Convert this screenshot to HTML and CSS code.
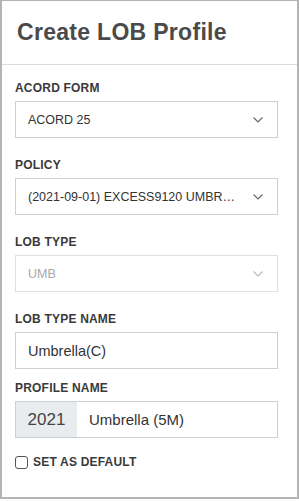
FILE: index.html
```html
<!DOCTYPE html>
<html lang="en">
<head>
    <meta charset="UTF-8">
    <meta name="viewport" content="width=device-width, initial-scale=1.0">
    <title>Create LOB Profile</title>
    <link rel="stylesheet" href="styles.css">
</head>
<body>
    <div class="panel">
        <div class="panel-header">
            <h1>Create LOB Profile</h1>
        </div>

        <div class="panel-body">
            <div class="field">
                <label>ACORD FORM</label>
                <div class="select">
                    <span class="select-value">ACORD 25</span>
                    <svg class="chevron" width="10" height="6" viewBox="0 0 10 6"><path d="M0.5 0.5 L5 5 L9.5 0.5" fill="none" stroke="#666" stroke-width="1.2"/></svg>
                </div>
            </div>

            <div class="field">
                <label>POLICY</label>
                <div class="select">
                    <span class="select-value">(2021-09-01) EXCESS9120 UMBRELLA</span>
                    <svg class="chevron" width="10" height="6" viewBox="0 0 10 6"><path d="M0.5 0.5 L5 5 L9.5 0.5" fill="none" stroke="#666" stroke-width="1.2"/></svg>
                </div>
            </div>

            <div class="field">
                <label>LOB TYPE</label>
                <div class="select disabled">
                    <span class="select-value">UMB</span>
                    <svg class="chevron" width="10" height="6" viewBox="0 0 10 6"><path d="M0.5 0.5 L5 5 L9.5 0.5" fill="none" stroke="#bbb" stroke-width="1.2"/></svg>
                </div>
            </div>

            <div class="field tight">
                <label>LOB TYPE NAME</label>
                <div class="text-input">Umbrella(C)</div>
            </div>

            <div class="field">
                <label>PROFILE NAME</label>
                <div class="input-group">
                    <span class="addon">2021</span>
                    <span class="group-value">Umbrella (5M)</span>
                </div>
            </div>

            <div class="check-row">
                <span class="checkbox"></span>
                <span class="check-label">SET AS DEFAULT</span>
            </div>
        </div>
    </div>
</body>
</html>
```

FILE: styles.css
```css
* {
    box-sizing: border-box;
}

body {
    margin: 0;
    font-family: 'Liberation Sans', Arial, sans-serif;
    color: #333;
    background-color: white;
}

.panel {
    height: 499px;
    border: 2px solid #b4b4b4;
    border-top-width: 1px;
    background-color: white;
}

.panel-header {
    height: 64px;
    padding: 0 15px;
    display: flex;
    align-items: center;
    border-bottom: 1px solid #d9dce0;
}

h1 {
    margin: 0;
    font-size: 23px;
    letter-spacing: 0.3px;
    font-weight: bold;
    color: #4a4a4a;
}

.panel-body {
    padding: 16px 19px 0 13px;
}

.field {
    margin-bottom: 20px;
}

.field.tight {
    margin-bottom: 12px;
}

.field label {
    display: block;
    font-size: 12px;
    line-height: 14px;
    letter-spacing: 0.2px;
    font-weight: bold;
    color: #3a3a3a;
    margin-bottom: 6px;
}

.select,
.text-input,
.input-group {
    height: 37px;
    border: 1px solid #cfcfcf;
    display: flex;
    align-items: center;
    color: #333;
}

.select {
    padding: 0 12px;
    font-size: 12.5px;
}

.select-value {
    flex: 1;
    white-space: nowrap;
    overflow: hidden;
    text-overflow: ellipsis;
    padding-right: 14px;
}

.chevron {
    flex-shrink: 0;
    margin-right: 2px;
}

.select.disabled {
    color: #a8a8a8;
    border-color: #e0e0e0;
}

.text-input {
    padding: 0 12px;
    font-size: 14.5px;
}

.input-group {
    font-size: 15px;
}

.addon {
    width: 61px;
    height: 100%;
    display: flex;
    align-items: center;
    justify-content: center;
    background-color: #e9ecef;
    font-size: 17px;
    color: #444;
}

.group-value {
    padding-left: 12px;
}

.check-row {
    display: flex;
    align-items: center;
    margin-top: -3px;
}

.checkbox {
    width: 13px;
    height: 13px;
    border: 1px solid #555;
    border-radius: 3px;
    margin-right: 5px;
}

.check-label {
    font-size: 12px;
    letter-spacing: 0.2px;
    font-weight: bold;
    color: #3a3a3a;
}
```
